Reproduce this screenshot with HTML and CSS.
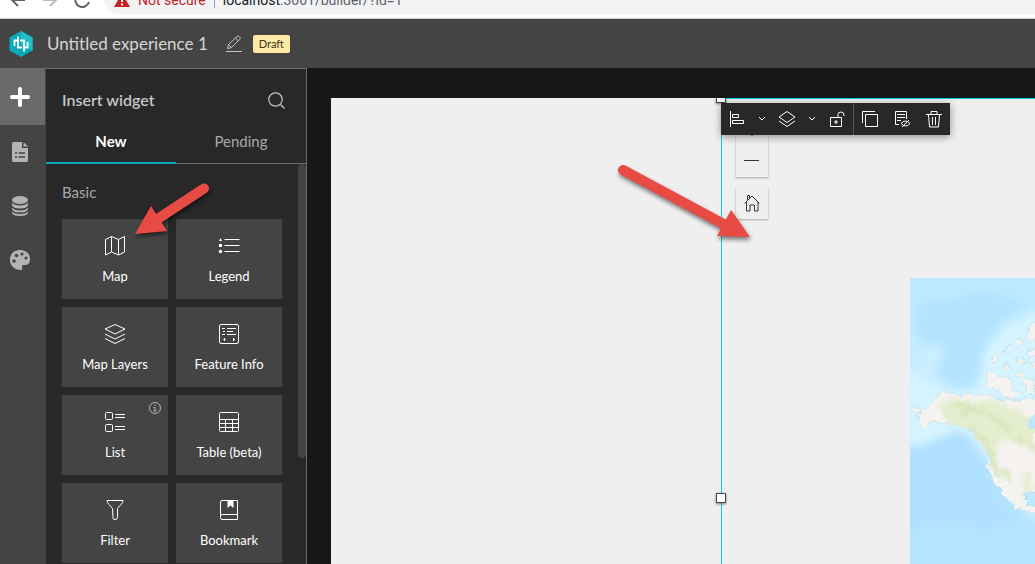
FILE: index.html
```html
<!DOCTYPE html>
<html lang="en">
<head>
<meta charset="utf-8">
<title>Untitled experience 1</title>
<link rel="stylesheet" href="styles.css">
</head>
<body>
<div class="browser">
  <div class="browser-row">
    <button class="nav-btn" aria-label="Back"><svg width="20" height="20" viewBox="0 0 20 20"><path d="M17 10H4M10 4l-6 6 6 6" stroke="#5f6368" stroke-width="2" fill="none"/></svg></button>
    <button class="nav-btn" aria-label="Forward"><svg width="20" height="20" viewBox="0 0 20 20"><path d="M3 10h13M10 4l6 6-6 6" stroke="#babcbe" stroke-width="2" fill="none"/></svg></button>
    <button class="nav-btn" aria-label="Reload"><svg width="20" height="20" viewBox="0 0 20 20"><path d="M16 6a7 7 0 1 0 1 6" stroke="#5f6368" stroke-width="2" fill="none"/></svg></button>
    <div class="address">
      <svg width="16" height="16" viewBox="0 0 16 16"><path d="M8 1l8 14H0z" fill="#c5221f"/><path d="M8 6v4M8 11.500v2" stroke="#fff" stroke-width="2"/></svg>
      <span class="insecure">Not secure</span><span class="bar"></span><span class="url"><b>localhost</b>:3001/builder/?id=1</span>
    </div>
  </div>
</div>

<header class="header">
  <svg class="logo" width="24" height="26" viewBox="0 0 24 26"><path d="M12 0l11.500 6.500v13L12 26 .5 19.500v-13z" fill="#09a9b9"/><path d="M12 0l11.500 6.500v13L12 13z" fill="#20bfcb"/><path d="M9 5.500v11h4M15 20.500v-11h-4M9 9.500H5.500V15M15 16.500h3.500V11" fill="none" stroke="#fff" stroke-width="1.800"/></svg>
  <h1 class="title">Untitled experience 1</h1>
  <button class="edit" aria-label="Rename"><svg width="16" height="17" viewBox="0 0 16 17" fill="none" stroke="#c5c5c5"><path d="M1.500 13.500l1-4L11 1.500q1-1 2 0l.8.800q1 1 0 2L5.500 12.500zM9.500 3l3 3M2.500 9.500l3 3M0 16.500h16"/></svg></button>
  <span class="draft">Draft</span>
</header>

<div class="workspace">
  <nav class="rail">
    <button class="rail-btn active" aria-label="Insert"><svg width="20" height="20" viewBox="0 0 20 20"><path d="M10 2v16M2 10h16" stroke="#fff" stroke-width="4" stroke-linecap="round"/></svg></button>
    <button class="rail-btn" aria-label="Page"><svg width="16" height="20" viewBox="0 0 16 20"><path d="M1.500 0H10v6h6v12.500q0 1.500-1.500 1.500h-13Q0 20 0 18.500v-17Q0 0 1.500 0zM11.500 0L16 4.500h-4.500z" fill="#b3b3b3"/><path d="M3 11h2M6.500 11H13M3 15h2M6.500 15H13" stroke="#444" stroke-width="1.500"/></svg></button>
    <button class="rail-btn" aria-label="Data"><svg width="16" height="20" viewBox="0 0 16 20" fill="#b3b3b3"><ellipse cx="8" cy="4" rx="8" ry="4"/><path d="M0 6.500q2 3 8 3t8-3V9q-1 3.500-8 3.500T0 9zM0 11.500q2 3 8 3t8-3V13q-1 3.500-8 3.500T0 13zM0 15.500q2 2.500 8 2.500t8-2.500V17q-1 3-8 3t-8-3z"/></svg></button>
    <button class="rail-btn" aria-label="Theme"><svg width="20" height="20" viewBox="0 0 20 20"><path d="M10 0c6 0 10 4 10 9 0 4-2 6-5 6-2 0-3 0-3 2 0 1 1 3-1 3C5 20 0 16 0 10S4 0 10 0z" fill="#b3b3b3"/><g fill="#444"><circle cx="4" cy="11" r="1.800"/><circle cx="6.500" cy="5.500" r="1.800"/><circle cx="12" cy="4" r="1.600"/><circle cx="16" cy="8" r="1.600"/></g></svg></button>
  </nav>

  <aside class="panel">
    <div class="panel-head">
      <h2>Insert widget</h2>
      <button class="plain" aria-label="Search"><svg width="17" height="17" viewBox="0 0 17 17" fill="none" stroke="#c5c5c5" stroke-width="1.200"><circle cx="7.500" cy="7.500" r="6.700"/><path d="M12.500 12.500l4 4"/></svg></button>
    </div>
    <div class="tabs" role="tablist">
      <button class="tab selected" role="tab" aria-selected="true">New</button>
      <button class="tab" role="tab" aria-selected="false">Pending</button>
    </div>
    <div class="widgets">
      <div class="widget-list">
        <h3>Basic</h3>
        <div class="grid">
          <button class="card"><svg width="22" height="22" viewBox="0 0 22 22"><path d="M1.500 4.500l6-3 7 3 6-3v15.500l-6 3-7-3-6 3zM7.500 1.500V17M14.500 4.500V20"/></svg>Map</button>
          <button class="card"><svg width="22" height="22" viewBox="0 0 22 22"><path d="M6.500 4.500h15M6.500 10.500h15M6.500 16.500h15"/><path class="solid" d="M2.500 3l1.500 3H1zM1 9h3v3H1z"/><circle class="solid" cx="2.500" cy="16.500" r="1.700"/></svg>Legend</button>
          <button class="card"><svg width="22" height="22" viewBox="0 0 22 22"><path d="M1 6l10-4.500L21 6l-10 5zM1 11l10 5 10-5M1 15.500l10 5 10-5"/></svg>Map Layers</button>
          <button class="card"><svg width="22" height="22" viewBox="0 0 22 22"><rect x="1.500" y="1.500" width="19" height="19" rx="1.500"/><path d="M4 5.500h3M9 5.500h9M5 8.500h2M9 8.500h6M4 11.500h3M9 11.500h9M6.500 15v3M5.500 16.500h2M15.500 15v3M15 16.500h2"/></svg>Feature Info</button>
          <button class="card"><svg width="22" height="22" viewBox="0 0 22 22"><rect x="1.500" y="1.500" width="7" height="7" rx="1"/><rect x="1.500" y="13.500" width="7" height="7" rx="1"/><path d="M11 3.500h10M11 6.500h10M11 15.500h10M11 18.500h10"/></svg>List
            <svg class="info" width="12" height="12" viewBox="0 0 12 12"><circle cx="6" cy="6" r="5.500"/><path d="M6 2.500V4M4.500 5.500H6V9M4.500 9h3"/></svg></button>
          <button class="card"><svg width="22" height="22" viewBox="0 0 22 22"><rect x="1.500" y="1.500" width="19" height="19" rx="1"/><path d="M2 8.500h18M2 12.500h18M2 16.500h18M7.500 8.500v12M14.500 8.500v12"/></svg>Table (beta)</button>
          <button class="card"><svg width="22" height="22" viewBox="0 0 22 22"><path d="M3 1.500h16q0 2-2 4l-3.500 4v9q0 2-2.500 2t-2-2l-.5-9L5 5.500q-2-2-2-4z"/></svg>Filter</button>
          <button class="card"><svg width="22" height="22" viewBox="0 0 22 22"><path d="M4 1.500h15.500v19H4q-1.500 0-1.500-2V3q0-1.500 1.500-1.500zM2.500 17q0-1.500 2-1.500h15"/><path class="solid" d="M9.500 2h6v7l-3-2.500-3 2.500z"/></svg>Bookmark</button>
        </div>
      </div>
      <div class="scroll"></div>
    </div>
  </aside>

  <main class="stage">
    <div class="page">
      <div class="blank"></div>
      <section class="map-widget">
        <span class="handle top"></span><span class="handle side"></span>
        <div class="map-controls">
          <div class="zoom-box"><button aria-label="Zoom in"><svg width="16" height="16" viewBox="0 0 16 16"><path d="M8 0v15M0 7.500h16"/></svg></button><button aria-label="Zoom out"><svg width="16" height="16" viewBox="0 0 16 16"><path d="M0 7.500h15"/></svg></button></div>
          <button class="home" aria-label="Home"><svg width="16" height="17" viewBox="0 0 16 17"><path d="M.5 8.500L8 1l7.500 7.500M2.500 7v9h3.500V10h4.500v6h3.500V7M3.500 5.500v-5h2V3"/></svg></button>
        </div>
        <svg class="map" viewBox="0 0 125 286" preserveAspectRatio="xMinYMin slice" role="img" aria-label="World map">
          <defs>
            <filter id="rough" x="-10%" y="-10%" width="120%" height="120%"><feTurbulence type="fractalNoise" baseFrequency=".14" numOctaves="3" seed="4"/><feDisplacementMap in="SourceGraphic" scale="9" xChannelSelector="R" yChannelSelector="G"/></filter>
            <filter id="soft"><feGaussianBlur stdDeviation="4"/></filter>
            <filter id="haze"><feGaussianBlur stdDeviation="2"/></filter>
            <linearGradient id="sea" x2="0" y2="1"><stop offset="0" stop-color="#bce9ff"/><stop offset=".4" stop-color="#c9eeff"/><stop offset=".6" stop-color="#b3e2ff"/><stop offset="1" stop-color="#b7e5ff"/></linearGradient>
            <clipPath id="land"><path d="M24 122l10-9 19 4h20l17 5 35-2v116l-20-7-15-16-10-15-2-22-8-10-7-12-13-6-17-2-13-2-8 8-5-15z"/></clipPath>
          </defs>
          <rect width="125" height="286" fill="url(#sea)"/>
          <g filter="url(#soft)">
            <path d="M135 30L95 50 75 75 70 108l-20 8-25-8-30-18v80l27-5 35-11 30 42 38 50z" fill="#d6f4ff"/>
            <path d="M10 24l27-2 30-8 40 5 11 6-28 20-17 24-5 30-8 11-17-1-16-14 8-26-22-4-8-13z" fill="#b3e3ff"/>
            <path d="M-8 174l58-22 22 30 12 38 22 22-30 8-40-6-44 8z" fill="#b0e0ff"/>
            <path d="M12 72l20-6-8 26-10 4z" fill="#cbefff"/>
          </g>
          <g filter="url(#rough)">
            <g stroke="#b5ddec" stroke-width=".7" fill="#f5f3f0">
              <path d="M24 122l10-9 19 4h20l17 5 45-2v120l-30-11-15-16-10-15-2-22-8-10-7-12-13-6-17-2-13-2-8 8-5-15z"/>
              <path d="M76 95l8-2 4 7 9-2 7 6-1 8 9 3-8 5-12-2-3-6-8-2-5-3zM104 96l7-4 4 8 10 4v14l-8-4-5-9zM80 80l6-5 3 4-6 5zM90 88l8-3 4 5-8 2zM103 64l7-4 3 5-6 5zM93 72l4-4 3 3-4 4zM118 50l8-8 6 2v20l-13-3zM117 74l9-5 6 2v6l-13 3zM106 80l6-2 5 6-8 3zM119 86l6-3 5 2-3 7zM3 126l5 3 3 2-3 3-6-2z"/>
            </g>
            <g clip-path="url(#land)"><g filter="url(#haze)">
              <path d="M28 128l14-9 22 5 16-2 22 8 25 12v36l-20-10-15-8-6 12 3 22-8-3-1-16-7-12-12-12-22-3z" fill="#e4edce"/>
              <path d="M42 126l18 4 20 6 20 18M58 148l20 20 5 20 8 14M92 190l10 12M50 138l16-8M106 160l18 12" fill="none" stroke="#d2e3b7" stroke-width="4"/>
              <path d="M100 162l20 8 5 20-12 12-14-6-8-15z" fill="#f5f2ef"/>
              <path d="M112 200l10-10v28l-9 4z" fill="#e8efd6"/>
            </g></g>
            <path d="M132 134l-13 5 0 10 13 8M132 212l-17 3-1 7 7 7 11-4" fill="#bfe9ff" stroke="#b5ddec"/>
            <path d="M85 200l6 10 9 14M78 184l5 15" fill="none" stroke="#fff"/>
          </g>
        </svg>
        <div class="toolbar">
          <button aria-label="Align"><svg width="16" height="16" viewBox="0 0 16 16"><path d="M1.500 0v16M3.500 3.500h6v3h-6zM3.500 9.500h11v3h-11z"/></svg></button>
          <button class="drop" aria-label="Align options"><svg width="8" height="6" viewBox="0 0 8 6"><path d="M1 1l3 3 3-3"/></svg></button>
          <button aria-label="Arrange"><svg width="18" height="16" viewBox="0 0 18 16"><path d="M1 6l8-5.500L17 6l-8 5.500zM1 10l8 5.500 8-5.500"/></svg></button>
          <button class="drop" aria-label="Arrange options"><svg width="8" height="6" viewBox="0 0 8 6"><path d="M1 1l3 3 3-3"/></svg></button>
          <button aria-label="Lock"><svg width="16" height="17" viewBox="0 0 16 17"><path d="M1.500 6.500h11v9h-11zM9 6V3.500q0-2.500 3-2.500t3 3V5"/><path d="M6 10h2v2H6z"/></svg></button>
          <span class="divider"></span>
          <button aria-label="Duplicate"><svg width="16" height="16" viewBox="0 0 16 16"><path d="M3.500 3.500h12v12h-12zM.5 12V.5H13"/></svg></button>
          <button aria-label="Hide"><svg width="17" height="17" viewBox="0 0 17 17"><path d="M5 13.500H1.500v-13h11V8M3 3.500h8M3 6.500h8M3 9.500h4M7 12.500q4.500-5 9 0-4.500 5-9 0zM8 16l7-7"/></svg></button>
          <button aria-label="Delete"><svg width="16" height="17" viewBox="0 0 16 17"><path d="M0 3.500h16M5 3V.5h6V3M2.500 4l1 12h9l1-12M6.500 6v8M9.500 6v8"/></svg></button>
        </div>
      </section>
    </div>
  </main>

  <svg class="arrow left" width="86" height="64" viewBox="0 0 86 64"><path d="M76 7.500L31 37" stroke="#e84b43" stroke-width="10" stroke-linecap="round"/><path d="M7 53l16-28 16 25z" fill="#e84b43"/></svg>
  <svg class="arrow right" width="144" height="90" viewBox="0 0 144 90"><path d="M10 10l106 57" stroke="#e84b43" stroke-width="10" stroke-linecap="round"/><path d="M137 77l-33-1 14-26z" fill="#e84b43"/></svg>
</div>
</body>
</html>
```

FILE: styles.css
```css
* { box-sizing: border-box; }
body {
  margin: 0;
  height: 100vh;
  display: flex;
  flex-direction: column;
  overflow: hidden;
  font-family: Lato, "Open Sans", sans-serif;
  background: #181818;
}
button {
  border: 0;
  padding: 0;
  background: none;
  color: inherit;
  font: inherit;
  display: flex;
  align-items: center;
  justify-content: center;
}
svg { flex: none; }
h1, h2, h3 { margin: 0; font-weight: 400; }

.browser {
  flex: none;
  height: 19px;
  background: #fff;
  border-bottom: 1px solid #d0d0d0;
  overflow: hidden;
}
.browser-row {
  display: flex;
  height: 28px;
  margin-top: -14px;
  padding-left: 8px;
  gap: 12px;
}
.nav-btn { width: 20px; }
.address {
  flex: 1;
  display: flex;
  align-items: center;
  padding-left: 10px;
  border-radius: 14px 0 0 14px;
  background: #f1f3f4;
  font: 14px/20px Roboto, sans-serif;
  color: #5f6368;
}
.insecure { margin-left: 8px; color: #c5221f; }
.bar { width: 1px; height: 16px; margin: 0 8px; background: #9aa0a6; }
.url b { font-weight: 400; color: #202124; }

.header {
  flex: none;
  height: 49px;
  display: flex;
  align-items: center;
  padding-left: 9px;
  background: #444;
}
.title {
  margin-left: 14px;
  font-size: 17px;
  line-height: 24px;
  color: #d5d5d5;
}
.edit { margin-left: 18px; }
.draft {
  margin-left: 11px;
  padding: 0 6px;
  border-radius: 2px;
  background: #ffe9a6;
  color: #3c3214;
  font-size: 11px;
  line-height: 18px;
}

.workspace { position: relative; flex: 1; min-height: 0; display: flex; }
.rail { flex: none; width: 46px; background: #444; border-top: 1px solid #6a6a6a; }
.rail-btn { width: 45px; height: 54px; padding-right: 5px; }
.rail-btn.active { height: 56px; background: #6a6a6a; }

.panel {
  flex: none;
  width: 261px;
  display: flex;
  flex-direction: column;
  background: #282828;
  border-top: 1px solid #6a6a6a;
  border-right: 1px solid #6a6a6a;
}
.panel-head {
  display: flex;
  align-items: center;
  justify-content: space-between;
  height: 62px;
  padding: 0 21px 0 16px;
}
.panel-head h2 { font-size: 16px; line-height: 24px; font-weight: 600; color: #c5c5c5; }
.tabs { flex: none; display: flex; height: 33px; }
.tab {
  flex: 1;
  padding-bottom: 12px;
  border-bottom: 1px solid #6a6a6a;
  color: #a8a8a8;
  font-size: 15px;
}
.tab.selected { border-bottom: 2px solid #00aabb; color: #fff; font-weight: 700; }
.widgets { flex: 1; min-height: 0; display: flex; overflow: hidden; }
.widget-list { flex: 1; padding: 18px 16px 0; }
.widget-list h3 { font-size: 15px; line-height: 20px; color: #a8a8a8; }
.grid {
  display: grid;
  grid-template-columns: 1fr 1fr;
  gap: 8px;
  margin-top: 17px;
}
.card {
  position: relative;
  flex-direction: column;
  gap: 10px;
  height: 80px;
  padding-top: 2px;
  background: #444;
  color: #fff;
  font-size: 13px;
  line-height: 18px;
}
.card svg { fill: none; stroke: #fff; }
.card .solid { fill: #fff; stroke: none; }
.card .info { position: absolute; top: 7px; right: 7px; stroke: #b3b3b3; }
.scroll { width: 8px; height: 294px; border-radius: 4px; background: #444; }

.stage { flex: 1; min-width: 0; display: flex; padding: 30px 0 0 24px; }
.page { flex: 1; display: flex; background: #efefef; }
.blank { flex: none; width: 390px; }
.map-widget {
  position: relative;
  flex: 1;
  border-top: 1px solid #00d0e4;
  border-left: 1px solid #00d0e4;
}
.handle {
  position: absolute;
  width: 10px;
  height: 10px;
  background: #fff;
  border: 1px solid #444;
  box-shadow: 0 1px 3px rgba(0, 0, 0, .5);
}
.handle.top { top: -1px; left: -6px; height: 5px; border-top: 0; }
.handle.side { top: 394px; left: -6px; }
.map-controls { position: absolute; top: 14px; left: 14px; }
.map-controls button { width: 32px; height: 32px; }
.map-controls svg { fill: none; stroke: #333; }
.zoom-box, .home { box-shadow: 0 1px 2px rgba(0, 0, 0, .3); }
.home { margin-top: 10px; }
.map { position: absolute; top: 179px; left: 188px; width: calc(100% - 188px); height: calc(100% - 179px); }
.toolbar {
  position: absolute;
  top: 4px;
  left: -1px;
  display: flex;
  height: 32px;
  background: #282828;
  box-shadow: 0 2px 8px rgba(0, 0, 0, .4);
}
.toolbar button { width: 32px; }
.toolbar .drop { width: 18px; }
.toolbar svg { fill: none; stroke: #fff; }
.divider { width: 1px; background: #555; }

.arrow { position: absolute; fill: none; filter: drop-shadow(1px 3px 2px rgba(0, 0, 0, .5)); pointer-events: none; }
.arrow.left { left: 128px; top: 113px; }
.arrow.right { left: 613px; top: 92px; }
```
